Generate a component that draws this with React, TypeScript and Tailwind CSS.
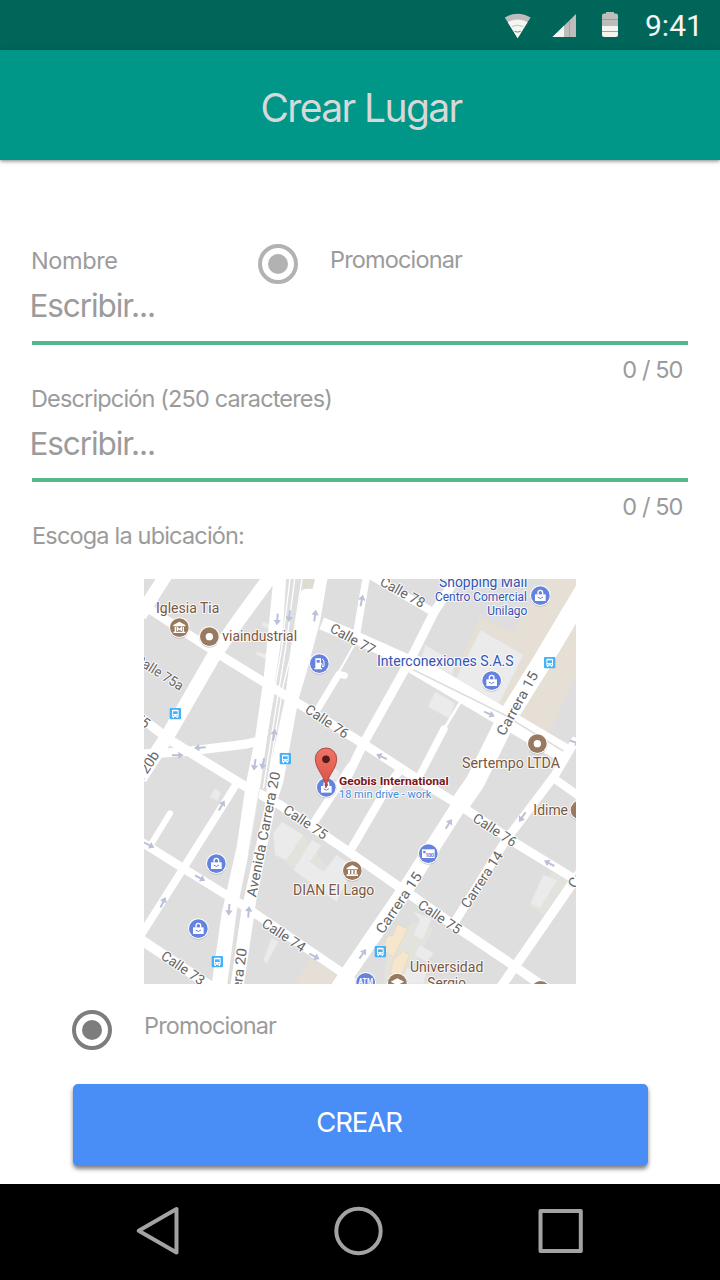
import React from "react";

function StatusBar() {
  return (
    <div className="flex h-[50px] items-start bg-[#00665a] pl-[504px] text-[#f5f5f1]">
      <svg className="mt-[12px] h-[28px] w-[28px] shrink-0" viewBox="0 0 28 28">
        <path d="M0.8 5.6C8.4.4 18.8.4 26.6 5.6L13.6 26.2z" fill="#bdbdbb" />
        <path d="M3.8 10.3C9.5 6.6 17.8 6.6 23.5 10.3L13.6 26.2z" fill="#f5f5f1" />
        <path d="M8 14.500Q13.600 11.800 19.200 14.500" fill="none" stroke="#a9c3be" strokeWidth="0.900" />
        <path d="M10.500 19.300q3.100 1.600 6.200 0" fill="none" stroke="#5a9188" strokeWidth="1" />
      </svg>
      <svg className="ml-[20px] mt-[12px] h-[28px] w-[26px] shrink-0" viewBox="0 0 26 28">
        <path d="M0.5 25L24 2V25z" fill="#bdbdbb" />
        <path d="M0.5 25L12 13.700V25z" fill="#f5f5f1" />
        <path d="M17.500 8.500V25" stroke="#8da8a3" strokeWidth="0.900" />
      </svg>
      <svg className="ml-[24px] mt-[12px] h-[28px] w-[16px] shrink-0" viewBox="0 0 16 28">
        <path d="M4 0h8v1.500h2q2 0 2 2V14H0V3.500q0-2 2-2h2z" fill="#bdbdbb" />
        <path d="M0 14h16v9q0 2-2 2H2q-2 0-2-2z" fill="#f5f5f1" />
        <path d="M0 7.500h16M0 19.500h16" stroke="#7da89f" strokeWidth="0.900" />
      </svg>
      <span className="ml-[27px] mt-[8px] whitespace-nowrap font-['Roboto'] text-[30px] leading-[36px]">9:41</span>
    </div>
  );
}

function Radio({ className }: { className: string }) {
  return (
    <svg className={`h-10 w-10 shrink-0 ${className}`} viewBox="0 0 40 40" fill="currentColor">
      <circle cx="20" cy="20" r="18" fill="none" stroke="currentColor" strokeWidth="4" />
      <circle cx="20" cy="20" r="10" />
    </svg>
  );
}

type LabelProps = {
  x: number;
  y: number;
  w?: number;
  size?: number;
  fill?: string;
  rotate?: number;
  weight?: number;
  children: string;
};

function Label({ x, y, w, size = 42, fill = "#666", rotate = 0, weight = 400, children }: LabelProps) {
  return (
    <text
      transform={`translate(${x} ${y}) rotate(${rotate})`}
      fontSize={size}
      fontWeight={weight}
      fill={fill}
      stroke="#fff"
      strokeOpacity="0.85"
      strokeWidth="6"
      strokeLinejoin="round"
      paintOrder="stroke"
      textLength={w}
      lengthAdjust="spacingAndGlyphs"
    >
      {children}
    </text>
  );
}

function Poi({ x, y, brown = false, children }: { x: number; y: number; brown?: boolean; children?: React.ReactNode }) {
  return (
    <g transform={`translate(${x} ${y})`}>
      <circle cy="2" r="31" fill="#999" opacity="0.55" />
      <circle r="31" fill="#fff" />
      <circle r="28" fill={brown ? "#997a61" : "#6682df"} />
      {children}
    </g>
  );
}

function Bag({ x, y }: { x: number; y: number }) {
  return (
    <Poi x={x} y={y}>
      <path d="M-16-4H16V16H-16z" fill="#fff" />
      <path d="M-7-3V-9a7 7 0 0 1 14 0v6" fill="none" stroke="#fff" strokeWidth="4" />
      <path d="M-8 4Q0 13 8 4" fill="none" stroke="#6682df" strokeWidth="3" />
    </Poi>
  );
}

function Ring({ x, y }: { x: number; y: number }) {
  return (
    <Poi x={x} y={y} brown>
      <circle r="11" fill="#fff" />
    </Poi>
  );
}

function Columns({ x, y }: { x: number; y: number }) {
  return (
    <Poi x={x} y={y} brown>
      <path d="M-17-8L0-17 17-8V-4H-17zM-13-2h6V10h-6zM-3-2h6V10h-6zM7-2h6V10H7zM-17 11H17v5H-17z" fill="#fff" />
    </Poi>
  );
}

function Bus({ x, y }: { x: number; y: number }) {
  return (
    <g transform={`translate(${x} ${y})`}>
      <rect x="-17" y="-17" width="34" height="34" rx="3" fill="#44b1f8" />
      <path d="M-10-9q0-3 3-3H7q3 0 3 3V9H8v4H4V9H-4v4H-8V9h-2z" fill="#fff" />
      <path d="M-7-7H7V1H-7z" fill="#44b1f8" />
      <circle cx="-5" cy="5" r="1.800" fill="#44b1f8" />
      <circle cx="5" cy="5" r="1.800" fill="#44b1f8" />
    </g>
  );
}

const arrows: [number, number, number][] = [
  [412, 133, 94], [448, 123, 98], [525, 122, -82],
  [665, 77, -78], [180, 518, 176], [113, 541, 0], [344, 569, 100],
  [369, 566, 102], [402, 480, -80], [1048, 417, 24], [725, 545, 205],
  [1305, 502, 20], [245, 692, -60], [27, 810, 27], [180, 909, 28],
  [69, 982, -65], [267, 1004, 94], [326, 1011, -85], [523, 1144, 28],
  [668, 1137, -55], [926, 747, -58], [1147, 726, 125], [1228, 865, 208],
];

function StreetMap() {
  return (
    <svg className="block h-[405px] w-[432px] font-['Roboto',sans-serif]" viewBox="12 12 1296 1215">
      <rect x="12" y="12" width="1296" height="1215" fill="#dedede" />

      <g fill="#e5dfd5">
        <path d="M1018 125L1115 170 1215 12H1308V300L1228 475 1080 395 940 310z" />
        <path d="M510 1150L592 1200 570 1227H465z" />
      </g>
      <path d="M488 12H525V45H488z" fill="#dfdcd4" />
      <g fill="#e2e3dc">
        <path d="M405 835L460 885 560 950 585 905 490 780z" />
        <path d="M815 1040L880 1060 815 1190 870 1227H730L740 1130z" />
        <path d="M1235 890L1290 915 1215 1020 1165 990z" />
      </g>
      <g fill="#ebebeb" stroke="#e4e4e4" strokeWidth="2">
        <path d="M1022 165L1150 240 1078 385 948 310z" />
        <path d="M855 210L945 262 938 300 845 250z" />
        <path d="M885 350L945 385 928 430 864 395z" />
        <path d="M425 740L490 780 440 855 405 840 400 775z" />
        <path d="M515 795L545 810 510 860 550 890 590 840 640 875 590 980 460 885z" />
        <path d="M225 640L243 655 232 677 210 665z" />
        <path d="M395 1090L415 1100 380 1165 370 1155z" />
        <path d="M370 140L403 152 395 165 365 152zM350 230L388 240 378 252 347 238z" />
        <path d="M577 575L600 590 590 615 565 610z" />
        <path d="M1210 900L1252 915 1200 1000 1172 985z" />
        <path d="M820 1010L875 1030 848 1095 820 1080 840 1035z" />
        <path d="M840 1110L880 1135 860 1160 823 1140z" />
        <path d="M800 1180L860 1190 850 1227H785z" />
      </g>
      <g fill="#f5e6cd" stroke="#ead5b4" strokeWidth="2">
        <path d="M770 1047L803 1062 760 1147 730 1125 740 1085 760 1080z" />
        <path d="M790 1128L808 1140 785 1200 750 1195 760 1155z" />
      </g>

      <g fill="none" stroke="#fff" strokeLinejoin="round">
        <path d="M690 0L880 112" strokeWidth="24" />
        <path d="M545 145L648 188 813 262" strokeWidth="38" />
        <path d="M805 258L1278 538" strokeWidth="58" />
        <path d="M25 100L240 240 410 345 660 500 868 635 958 690 1128 805 1320 922" strokeWidth="27" />
        <path d="M5 430L90 495 300 625 420 690 640 840 798 950 948 1055 1118 1170 1210 1235" strokeWidth="28" />
        <path d="M0 798L130 880 300 985 610 1195 660 1240" strokeWidth="26" />
        <path d="M0 1092L215 1236" strokeWidth="30" />
        <path d="M78 0L0 122" strokeWidth="40" />
        <path d="M395 0L300 130 220 245 90 470 0 610" strokeWidth="42" />
        <path d="M0 537L120 532 315 508 355 498" strokeWidth="27" />
        <path d="M535 400L597 297 614 302" strokeWidth="20" strokeLinecap="round" />
        <path d="M597 290L660 178" strokeWidth="6" />
        <path d="M650 175L680 0" strokeWidth="22" />
        <path d="M955 0L883 110 813 250 668 510 615 620" strokeWidth="27" />
        <path d="M635 570L520 745" strokeWidth="24" />
        <path d="M912 462L835 610" strokeWidth="22" strokeLinecap="round" />
        <path d="M960 383L912 462" strokeWidth="8" />
        <path d="M780 585L743 635 635 820" strokeWidth="25" />
        <path d="M1340 35L1200 270 1100 430 1006 620 958 690" strokeWidth="58" />
        <path d="M1006 620L958 690 808 925 620 1200 590 1245" strokeWidth="46" />
        <path d="M1310 490L1245 600 1098 795 945 1040" strokeWidth="26" />
        <path d="M1235 605L1315 662" strokeWidth="24" />
        <path d="M1325 885L1128 1170 1080 1240" strokeWidth="28" />
        <path d="M295 618L130 880 0 1085" strokeWidth="23" />
        <path d="M90 715L35 805" strokeWidth="18" strokeLinecap="round" />
        <path d="M464 12L440 200 395 480 370 640" strokeWidth="4" />
        <path d="M450 12L425 220 352 640" strokeWidth="4" />
        <path d="M486 12L450 250 430 330 380 640" strokeWidth="4" />
      </g>
      <g fill="#fff">
        <path d="M400 12H438L430 150 405 320 362 625 330 815 290 1010 262 1227H215L245 1015 290 815 318 625 345 490 372 300z" />
        <path d="M525 12H562L540 140 500 290 475 375 430 620 405 700 350 970 312 1227H272L305 1000 375 690 385 600 435 370 452 240 482 50Q490 38 518 42z" />
      </g>
      <g fill="none" stroke="#dedede" strokeWidth="5">
        <path d="M820 284L1090 418 1270 528" />
        <path d="M359 640L325 835" strokeWidth="2" />
      </g>

      <g fill="#bac1d8">
        {arrows.map(([x, y, a], i) => (
          <path key={i} transform={`translate(${x} ${y}) rotate(${a})`} d="M-17-3H2V-11L18 0 2 11V3H-17z" />
        ))}
      </g>

      <Label x={567} y={169} w={147} rotate={29}>Calle 77</Label>
      <Label x={717} y={29} w={146} rotate={29}>Calle 78</Label>
      <Label x={492} y={410} w={147} rotate={34}>Calle 76</Label>
      <Label x={-18} y={262} w={162} rotate={32}>Calle 75a</Label>
      <Label x={-99} y={374} w={145} rotate={37}>Calle 75</Label>
      <Label x={-60} y={724} w={220} rotate={-57}>Carrera 20b</Label>
      <Label x={348} y={968} w={382} rotate={-79}>Avenida Carrera 20</Label>
      <Label x={268} y={1500} w={382} rotate={-82}>Avenida Carrera 20</Label>
      <Label x={427} y={712} w={149} rotate={34}>Calle 75</Label>
      <Label x={362} y={1053} w={147} rotate={33}>Calle 74</Label>
      <Label x={60} y={1150} w={147} rotate={34}>Calle 73</Label>
      <Label x={1093} y={485} w={212} rotate={-61}>Carrera 15</Label>
      <Label x={729} y={1079} w={212} rotate={-56}>Carrera 15</Label>
      <Label x={985} y={1003} w={194} rotate={-57}>Carrera 14</Label>
      <Label x={995} y={737} w={147} rotate={33}>Calle 76</Label>
      <Label x={830} y={997} w={147} rotate={34}>Calle 75</Label>
      <Label x={1306} y={943} w={205} rotate={-57}>Carrera 14</Label>

      <Label x={48} y={114} w={190} fill="#795740">Iglesia Tia</Label>
      <Label x={247} y={198} w={224} fill="#795740">viaindustrial</Label>
      <Label x={897} y={37} w={265} fill="#3454b4">Shopping Mall</Label>
      <Label x={885} y={79} w={276} size={37} fill="#3454b4">Centro Comercial</Label>
      <Label x={1042} y={121} w={120} size={37} fill="#3454b4">Unilago</Label>
      <Label x={711} y={274} w={410} fill="#3454b4">Interconexiones S.A.S</Label>
      <Label x={966} y={580} w={294} fill="#795740">Sertempo LTDA</Label>
      <Label x={1180} y={720} w={104} fill="#795740">Idime</Label>
      <Label x={459} y={961} w={244} fill="#795740">DIAN El Lago</Label>
      <Label x={810} y={1192} w={220} fill="#795740">Universidad</Label>
      <Label x={862} y={1239} w={116} fill="#795740">Sergio</Label>

      <Poi x={118} y={158} brown>
        <path d="M-18-8L0-18 18-8V-4H-18zM-14-2h4V12h-4zM10-2h4V12h-4zM-18 12H18v4H-18z" fill="#fff" />
        <path d="M-6 10V0L0 6 6 0V10" fill="none" stroke="#fff" strokeWidth="4" />
      </Poi>
      <Ring x={208} y={185} />
      <Ring x={1192} y={506} />
      <Ring x={1320} y={705} />
      <Columns x={637} y={887} />
      <Poi x={772} y={1224} brown>
        <path d="M-20-4L0-14 20-4 0 7z" fill="#fff" />
      </Poi>
      <Ring x={1202} y={1246} />
      <Poi x={538} y={266}>
        <path d="M-12-16H5V13h3v4H-15v-4h3z" fill="#fff" />
        <path d="M-8-11H1V-3H-8z" fill="#6682df" />
        <path d="M8-14L14-8V8Q9 13 8 5V0H5" fill="none" stroke="#fff" strokeWidth="3" />
      </Poi>
      <Bag x={1201} y={62} />
      <Bag x={1055} y={317} />
      <Bag x={229} y={866} />
      <Bag x={175} y={1061} />
      <Bag x={559} y={637} />
      <Poi x={865} y={836}>
        <path d="M-19-13H19V13H-19z" fill="#fff" />
        <circle cx="-12" cy="-5" r="4" fill="#6682df" />
        <text x="-9" y="10" fontSize="17" fontWeight="700" fill="#6682df" textLength="26">100</text>
      </Poi>
      <Poi x={677} y={1222}>
        <text x="-22" y="8" fontSize="27" fontWeight="700" fill="#fff" textLength="44" lengthAdjust="spacingAndGlyphs">ATM</text>
      </Poi>
      <Bus x={106} y={416} />
      <Bus x={436} y={551} />
      <Bus x={1229} y={263} />
      <Bus x={232} y={1160} />
      <Bus x={721} y={1130} />

      <defs>
        <linearGradient id="pin" x1="0" y1="0" x2="0" y2="1">
          <stop offset="0" stopColor="#ef7568" />
          <stop offset="1" stopColor="#db4f43" />
        </linearGradient>
      </defs>
      <path d="M558 639C555 600 526 585 526 551A32 32 0 0 1 590 551C590 585 561 600 558 639z" fill="url(#pin)" stroke="#a33c34" strokeWidth="2.500" />
      <circle cx="558" cy="553" r="11.500" fill="#541b17" />
      <Label x={597} y={630} w={329} size={35} weight={700} fill="#7c1419">Geobis International</Label>
      <Label x={597} y={668} w={277} size={33} fill="#4389dc">18 min drive - work</Label>
    </svg>
  );
}

function NavBar() {
  return (
    <div className="flex h-[96px] items-center bg-black pl-[134px] text-[#a3a3a3]">
      <svg className="h-[52px] w-[48px]" viewBox="0 0 48 52" fill="none" stroke="currentColor" strokeWidth="4" strokeLinejoin="round">
        <path d="M42.500 3V46.500L4.700 24.700z" />
      </svg>
      <svg className="ml-[150px] h-[52px] w-[52px]" viewBox="0 0 52 52" fill="none" stroke="currentColor" strokeWidth="4">
        <circle cx="26.500" cy="25" r="22.200" />
      </svg>
      <svg className="ml-[152px] h-[52px] w-[52px]" viewBox="0 0 52 52" fill="none" stroke="currentColor" strokeWidth="4" strokeLinejoin="round">
        <rect x="4.500" y="5" width="40.300" height="40" />
      </svg>
    </div>
  );
}

export default function App() {
  return (
    <div className="flex h-[1280px] w-[720px] flex-col overflow-hidden bg-white font-['Inter',sans-serif] text-[23.5px] leading-[30px] text-[#9b9b9b]">
      <StatusBar />
      <header className="flex h-[110px] justify-center bg-[#009688] pt-[34px] pl-[2px] shadow-[0_1px_4px_rgba(0,0,0,0.5)]">
        <h1 className="text-[39px] leading-[48px] tracking-[-1.6px] text-[#d8d8d8]">Crear Lugar</h1>
      </header>
      <main className="flex h-[1024px] flex-col pt-[84px]">
        <section className="px-8">
          <div className="flex h-[42px] items-start">
            <label className="-ml-px w-[227px] pt-[2px] tracking-[-0.4px]">Nombre</label>
            <Radio className="text-[#b2b2b2]" />
            <span className="ml-[32px] pt-px tracking-[-0.85px]">Promocionar</span>
          </div>
          <div className="-ml-[2.500px] h-[55px] text-[31.5px] leading-[40px] tracking-[-1.1px]">Escribir...</div>
          <div className="h-1 bg-[#52b98a]" />
          <div className="mt-[10px] h-[29px] pr-[5.500px] text-right tracking-[-0.9px]">0 / 50</div>
          <label className="-ml-px block h-[40px] tracking-[-0.85px]">Descripción (250 caracteres)</label>
          <div className="-ml-[2.500px] h-[54px] text-[31.5px] leading-[40px] tracking-[-1.1px]">Escribir...</div>
          <div className="h-1 bg-[#52b98a]" />
          <div className="mt-[10px] h-[29px] pr-[5.500px] text-right tracking-[-0.9px]">0 / 50</div>
          <div className="h-[58px] tracking-[-0.82px]">Escoga la ubicación:</div>
        </section>
        <div className="flex justify-center">
          <StreetMap />
        </div>
        <div className="mt-[26px] flex h-10 items-start px-[72px]">
          <Radio className="text-[#7d7d7d]" />
          <span className="ml-[32px] pt-px tracking-[-0.85px]">Promocionar</span>
        </div>
        <button className="mx-auto mt-[33.500px] flex h-[82px] w-[575px] items-start justify-center rounded-[5px] bg-[#488ef6] pt-[20.5px] pr-[2px] text-[27.5px] leading-[36px] tracking-[-1.1px] text-white shadow-[0_3px_4px_rgba(0,0,0,0.5)]">
          CREAR
        </button>
      </main>
      <NavBar />
    </div>
  );
}
